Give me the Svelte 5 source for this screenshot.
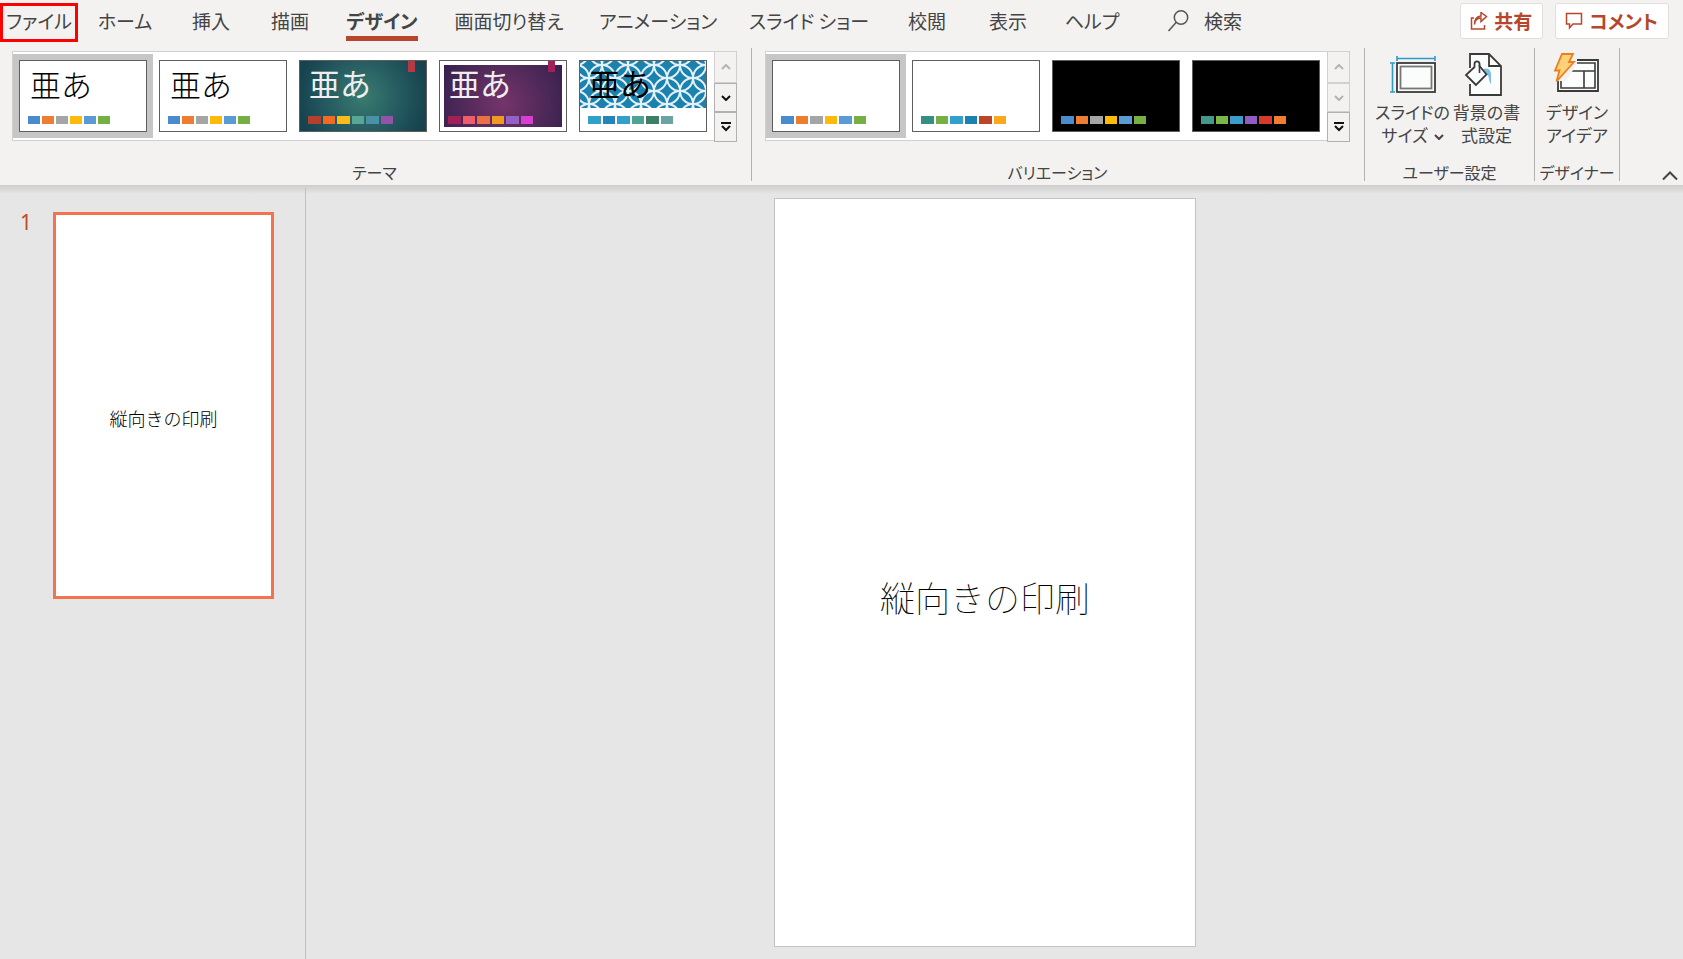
<!--
  Presentation editor window - ribbon with the design tab open,
  slide list on the left and the portrait slide on the canvas
-->
<script lang="ts">
	interface Theme {
		name: string;
		look: 'plain' | 'teal' | 'purple' | 'shippo' | 'black';
		colors: string[];
	}

	const tabs = [
		'ファイル',
		'ホーム',
		'挿入',
		'描画',
		'デザイン',
		'画面切り替え',
		'アニメーション',
		'スライド ショー',
		'校閲',
		'表示',
		'ヘルプ'
	];

	const office = ['#4a8ccb', '#ed7d31', '#a5a5a5', '#fcbb0a', '#5b9bd5', '#76b043'];

	const themes: Theme[] = [
		{ name: 'Office テーマ', look: 'plain', colors: office },
		{ name: 'Office テーマ 2', look: 'plain', colors: office },
		{
			name: 'イオン',
			look: 'teal',
			colors: ['#b3402c', '#f06c26', '#fcbb1c', '#58a794', '#4a90a8', '#9354a8']
		},
		{
			name: 'イオン ボードルーム',
			look: 'purple',
			colors: ['#a31f58', '#ee5d6c', '#ec7044', '#f09a20', '#9560c8', '#d63fd2']
		},
		{
			name: 'インテグラル',
			look: 'shippo',
			colors: ['#31a0cb', '#2287b8', '#31a0cb', '#50a294', '#3c7f66', '#6aa3a6']
		}
	];

	const variants: Theme[] = [
		{ name: 'バリエーション 1', look: 'plain', colors: office },
		{
			name: 'バリエーション 2',
			look: 'plain',
			colors: ['#35907f', '#76b043', '#31a0cb', '#1b82b0', '#bb4526', '#fba91c']
		},
		{ name: 'バリエーション 3', look: 'black', colors: office },
		{
			name: 'バリエーション 4',
			look: 'black',
			colors: ['#45998c', '#7cb548', '#3a9ccb', '#8f5cc4', '#d23c28', '#ed7d31']
		}
	];

	const title = '縦向きの印刷';

	let activeTab = $state('デザイン');
	let activeTheme = $state(0);
	let activeVariant = $state(0);
</script>

{#snippet swatches(colors: string[])}
	<span class="swatches">
		{#each colors as color}
			<span class="swatch" style="background: {color}"></span>
		{/each}
	</span>
{/snippet}

{#snippet scroller(canScroll: boolean)}
	<div class="scroller">
		<button type="button" class="scroll-btn" disabled aria-label="前の行">
			<svg width="10" height="6" viewBox="0 0 10 6"><path d="M1 5l4-4 4 4" /></svg>
		</button>
		<button type="button" class="scroll-btn" disabled={!canScroll} aria-label="次の行">
			<svg width="10" height="6" viewBox="0 0 10 6"><path d="M1 1l4 4 4-4" /></svg>
		</button>
		<button type="button" class="scroll-btn" aria-label="その他">
			<svg width="10" height="10" viewBox="0 0 10 10"><path d="M0 1h10M1 4l4 4 4-4" /></svg>
		</button>
	</div>
{/snippet}

<div class="window">
	<header class="tab-bar">
		<nav class="tabs">
			{#each tabs as tab, i}
				<button
					type="button"
					class="tab"
					class:marked={i === 0}
					class:active={tab === activeTab}
					onclick={() => (activeTab = tab)}
				>
					<span class="tab-text">{tab}</span>
				</button>
			{/each}
		</nav>
		<label class="search">
			<svg width="22" height="24" viewBox="0 0 22 24" aria-hidden="true">
				<circle cx="14" cy="8.5" r="6.7" />
				<path d="M9.3 13.3L1.5 22" />
			</svg>
			<input type="text" placeholder="検索" aria-label="検索" />
		</label>
		<div class="actions">
			<button type="button" class="action">
				<svg width="18" height="18" viewBox="0 0 18 18" aria-hidden="true">
					<path d="M4 6H1.5v11h13v-4" />
					<path d="M4.5 12.5c.3-4 2.7-6.2 6.5-6.4v3.4l5.5-5-5.5-4V4C7 4.3 4.6 7 4.5 12.5z" />
				</svg>
				共有
			</button>
			<button type="button" class="action">
				<svg width="18" height="18" viewBox="0 0 18 18" aria-hidden="true">
					<path d="M1.5 1.5h15V12H8l-3.5 3.8V12h-3z" />
				</svg>
				コメント
			</button>
		</div>
	</header>

	<div class="ribbon">
		<section class="group themes">
			<div class="gallery">
				{#each themes as theme, i}
					<button
						type="button"
						class="item"
						class:selected={i === activeTheme}
						aria-label={theme.name}
						onclick={() => (activeTheme = i)}
					>
						<span class="thumb {theme.look}" class:compact={theme.colors === office}>
							{#if theme.look === 'shippo'}
								<svg class="shippo-art" width="126" height="47" aria-hidden="true">
									<defs>
										<pattern
											id="shippo"
											width="26"
											height="26"
											patternUnits="userSpaceOnUse"
											patternTransform="translate(9 4)"
										>
											<rect width="26" height="26" fill="#1b82b0" />
											<g fill="none" stroke="#e4f1f6" stroke-width="2">
												<circle cx="0" cy="0" r="13" />
												<circle cx="26" cy="0" r="13" />
												<circle cx="0" cy="26" r="13" />
												<circle cx="26" cy="26" r="13" />
												<circle cx="13" cy="13" r="13" />
											</g>
										</pattern>
									</defs>
									<rect width="126" height="47" fill="url(#shippo)" />
								</svg>
							{/if}
							{#if theme.look === 'teal' || theme.look === 'purple'}
								<span class="ribbon-mark"></span>
							{/if}
							<span class="sample">亜あ</span>
							{@render swatches(theme.colors)}
						</span>
					</button>
				{/each}
				{@render scroller(true)}
			</div>
			<h2 class="group-name">テーマ</h2>
		</section>

		<section class="group variants">
			<div class="gallery">
				{#each variants as variant, i}
					<button
						type="button"
						class="item"
						class:selected={i === activeVariant}
						aria-label={variant.name}
						onclick={() => (activeVariant = i)}
					>
						<span class="thumb {variant.look}">
							{@render swatches(variant.colors)}
						</span>
					</button>
				{/each}
				{@render scroller(false)}
			</div>
			<h2 class="group-name">バリエーション</h2>
		</section>

		<section class="group customize">
			<div class="commands">
				<button type="button" class="command">
					<svg width="48" height="46" viewBox="0 0 48 46" fill="none" aria-hidden="true">
						<path d="M8 5.5h38M8 3v5M46 3v5M3.5 10v29M1 10h5M1 39h5" stroke="#2b9bc9" stroke-width="1.6" />
						<rect x="8" y="10" width="38" height="29" fill="#fafdfc" stroke="#3a3a3a" stroke-width="1.8" />
						<rect x="11.5" y="13.5" width="31" height="22" stroke="#797774" stroke-width="1.8" />
					</svg>
					<span>スライドの<br />サイズ
						<svg class="caret" width="10" height="6" viewBox="0 0 10 6" aria-hidden="true"><path d="M1 1l4 4 4-4" /></svg>
					</span>
				</button>
				<button type="button" class="command">
					<svg width="48" height="46" viewBox="4 0 48 46" fill="none" aria-hidden="true">
						<path d="M11 1h19l12 12v29H11z" fill="#fafdfc" />
						<path d="M11 15V1h19l12 12v29H11V31M30 1v12h12" stroke="#3a3a3a" stroke-width="1.8" />
						<path d="M24 16c5-2 9 1 8 8v7c-3-3-1-9-5-10z" fill="#7cc0e2" />
						<path d="M17 32L7 22l8.5-8V11c0-3.5 5-3.5 5 0v2l7 8.5z" fill="#fafdfc" stroke="#3a3a3a" stroke-width="1.8" />
						<path d="M20.5 12v8" stroke="#3a3a3a" stroke-width="1.6" />
					</svg>
					<span>背景の書<br />式設定</span>
				</button>
			</div>
			<h2 class="group-name">ユーザー設定</h2>
		</section>

		<section class="group designer">
			<div class="commands">
				<button type="button" class="command">
					<svg width="48" height="46" viewBox="0 0 48 46" fill="none" aria-hidden="true">
						<path d="M5 7h40v31H5z" fill="#fafdfc" stroke="#3a3a3a" stroke-width="1.8" />
						<path d="M8 10h34v25H8zM14 18h28M31 18v17" stroke="#3a3a3a" stroke-width="1.6" />
						<path d="M10-2h14v13l-11 17H0V6z" fill="#f3f2f1" />
						<path d="M9 1h11l-4 8h5L3.5 28.5l3-11H2z" fill="#fbd27a" stroke="#ee7d1b" stroke-width="1.8" />
					</svg>
					<span>デザイン<br />アイデア</span>
				</button>
			</div>
			<h2 class="group-name">デザイナー</h2>
		</section>

		<button type="button" class="collapse" aria-label="リボンを折りたたむ">
			<svg width="16" height="10" viewBox="0 0 16 10"><path d="M1 8.5l7-7 7 7" /></svg>
		</button>
	</div>

	<main class="workspace">
		<aside class="slide-list">
			<span class="slide-number">1</span>
			<button type="button" class="slide-thumb">{title}</button>
		</aside>
		<div class="canvas">
			<article class="slide">
				<h1>{title}</h1>
			</article>
		</div>
	</main>
</div>

<style>
	:global(body) {
		margin: 0;
	}

	.window {
		--ribbon-bg: #f3f2f1;
		--text: #444;
		--accent: #b7472a;
		--line: #b3b1af;
		--line-light: #d2d0ce;

		display: flex;
		flex-direction: column;
		min-height: 100vh;
		background: #e6e6e6;
		color: var(--text);
		font-family: 'Noto Sans CJK JP', sans-serif;
		font-feature-settings: 'palt';
	}

	button,
	input {
		margin: 0;
		padding: 0;
		border: none;
		background: none;
		color: inherit;
		font: inherit;
		font-feature-settings: inherit;
	}

	button {
		cursor: pointer;
	}

	svg {
		flex: none;
	}

	/* tabs */
	.tab-bar {
		display: flex;
		align-items: flex-start;
		height: 48px;
		padding-top: 3px;
		background: var(--ribbon-bg);
		font-size: 19px;
		line-height: 30px;
		box-sizing: border-box;
	}

	.tabs {
		display: grid;
		grid-template-columns: 78px 94px 78px 80px 104px 150px 148px 154px 82px 80px 88px;
	}

	.tab {
		display: flex;
		justify-content: center;
		height: 39px;
		padding-top: 3px;
		white-space: nowrap;
		box-sizing: border-box;
	}

	.marked {
		padding-top: 0;
		border: 3px solid #f00;
	}

	.tab-text {
		height: 30px;
	}

	.active .tab-text {
		border-bottom: 5px solid var(--accent);
		font-weight: 700;
	}

	.search {
		display: flex;
		align-items: center;
		gap: 15px;
		margin-left: 31px;
		height: 36px;
	}

	.search svg {
		fill: none;
		stroke: #555;
		stroke-width: 1.5;
	}

	.search input {
		width: 120px;
		outline: none;
	}

	.search input::placeholder {
		color: var(--text);
		opacity: 1;
	}

	.actions {
		display: flex;
		gap: 12px;
		margin-left: auto;
		padding-right: 14px;
	}

	.action {
		display: flex;
		align-items: center;
		gap: 6px;
		height: 36px;
		padding: 0 10px 0 9px;
		border: 1px solid #e1dfdd;
		border-radius: 3px;
		background: #fff;
		color: var(--accent);
		font-weight: 700;
		box-sizing: border-box;
	}

	.action svg {
		fill: none;
		stroke: var(--accent);
		stroke-width: 1.5;
	}

	/* ribbon */
	.ribbon {
		display: flex;
		height: 137px;
		background: var(--ribbon-bg);
		font-size: 17px;
		line-height: 23px;
	}

	.group {
		display: flex;
		flex-direction: column;
		justify-content: space-between;
		height: 133px;
		border-right: 1px solid var(--line);
		box-sizing: border-box;
	}

	.themes {
		width: 752px;
		padding: 0 14px 0 12px;
	}

	.variants {
		width: 613px;
		padding: 0 14px 0 13px;
	}

	.customize {
		width: 170px;
	}

	.designer {
		width: 85px;
	}

	.group-name {
		margin: 0;
		height: 20px;
		font-size: 16px;
		font-weight: 400;
		line-height: 22px;
		text-align: center;
		white-space: nowrap;
	}

	.gallery {
		display: flex;
		height: 90px;
		margin-top: 3px;
		border: 1px solid var(--line-light);
		border-right: none;
		background: #fff;
		box-sizing: border-box;
	}

	.item {
		display: flex;
		align-items: center;
		justify-content: center;
		width: 140px;
		height: 84px;
		margin-top: 2px;
	}

	.selected {
		background: #c6c6c6;
	}

	.thumb {
		position: relative;
		display: flex;
		flex-direction: column;
		width: 128px;
		height: 72px;
		padding: 4px 8px 7px;
		border: 1px solid #605e5c;
		background: #fff;
		color: #000;
		text-align: left;
		box-sizing: border-box;
	}

	.sample {
		position: relative;
		padding-left: 2px;
		height: 38px;
		font-size: 31px;
		font-weight: 300;
		line-height: 38px;
		font-feature-settings: normal;
	}

	.teal,
	.purple {
		color: #eee;
	}

	.teal .sample,
	.purple .sample,
	.shippo .sample {
		padding-left: 1px;
		font-weight: 400;
		line-height: 36px;
	}

	.teal {
		background: radial-gradient(circle at 50% 50%, #397c70, #24585f 55%, #16434f 90%);
	}

	.purple {
		background: radial-gradient(circle at 50% 60%, #76346a, #4b2857 60%, #35204b 95%);
		box-shadow: inset 0 0 0 4px #fff;
	}

	.black {
		background: #000;
	}

	.shippo-art {
		position: absolute;
		top: 0;
		left: 0;
	}

	.ribbon-mark {
		position: absolute;
		top: 0;
		right: 11px;
		width: 7px;
		height: 11px;
		background: #b63a43;
	}

	.purple .ribbon-mark {
		background: #a31f58;
	}

	.swatches {
		display: flex;
		gap: 2px;
		width: 85px;
		height: 8px;
		margin-top: auto;
	}

	.compact .swatches {
		width: 82px;
	}

	.swatch {
		flex: 1;
	}

	.scroller {
		display: grid;
		grid-template-rows: 32px 29px 30px;
		width: 23px;
		margin: -1px 0 0 auto;
	}

	.scroll-btn {
		display: flex;
		align-items: center;
		justify-content: center;
		border: 1px solid var(--line);
		background: var(--ribbon-bg);
	}

	.scroll-btn svg,
	.caret,
	.collapse svg {
		fill: none;
		stroke: #111;
		stroke-width: 2;
	}

	.scroll-btn:disabled {
		border-color: var(--line-light);
		cursor: default;
	}

	.scroll-btn:disabled svg {
		stroke: #b5b3b1;
	}

	.commands {
		display: flex;
		justify-content: center;
	}

	.command {
		display: flex;
		flex-direction: column;
		align-items: center;
		gap: 1px;
		width: 74px;
		padding-top: 5px;
		white-space: nowrap;
	}

	.command .caret {
		margin: 0 0 2px 2px;
		stroke: var(--text);
	}

	.collapse {
		display: flex;
		align-items: flex-end;
		margin-left: auto;
		padding: 0 5px 4px;
	}

	.collapse svg {
		stroke: var(--text);
	}

	/* workspace */
	.workspace {
		display: flex;
		flex: 1;
		padding-top: 3px;
		background: linear-gradient(#cdcdcd, #e6e6e6 9px);
	}

	.slide-list {
		display: flex;
		align-items: flex-start;
		width: 306px;
		padding: 24px 0 0 20px;
		border-right: 1px solid #c0c0c0;
		box-sizing: border-box;
	}

	.slide-number {
		width: 33px;
		color: #c0482a;
		font-family: 'Noto Sans', sans-serif;
		font-size: 21px;
		line-height: 20px;
	}

	.slide-thumb {
		width: 221px;
		height: 387px;
		padding-top: 24px;
		border: 3px solid #f4734f;
		background: #fff;
		color: #000;
		font-size: 18px;
		font-weight: 200;
		font-feature-settings: normal;
		box-sizing: border-box;
	}

	.canvas {
		display: flex;
		flex: 1;
		justify-content: center;
		align-items: flex-start;
		padding: 10px 19px 10px 0;
	}

	.slide {
		display: flex;
		align-items: center;
		justify-content: center;
		height: calc(100vh - 210px);
		aspect-ratio: 9 / 16;
		padding-top: 48px;
		border: 1px solid #c3c3c3;
		background: #fff;
		color: #000;
		box-sizing: border-box;
	}

	.slide h1 {
		margin: 0;
		font-size: 35px;
		font-weight: 100;
		font-feature-settings: normal;
	}
</style>
